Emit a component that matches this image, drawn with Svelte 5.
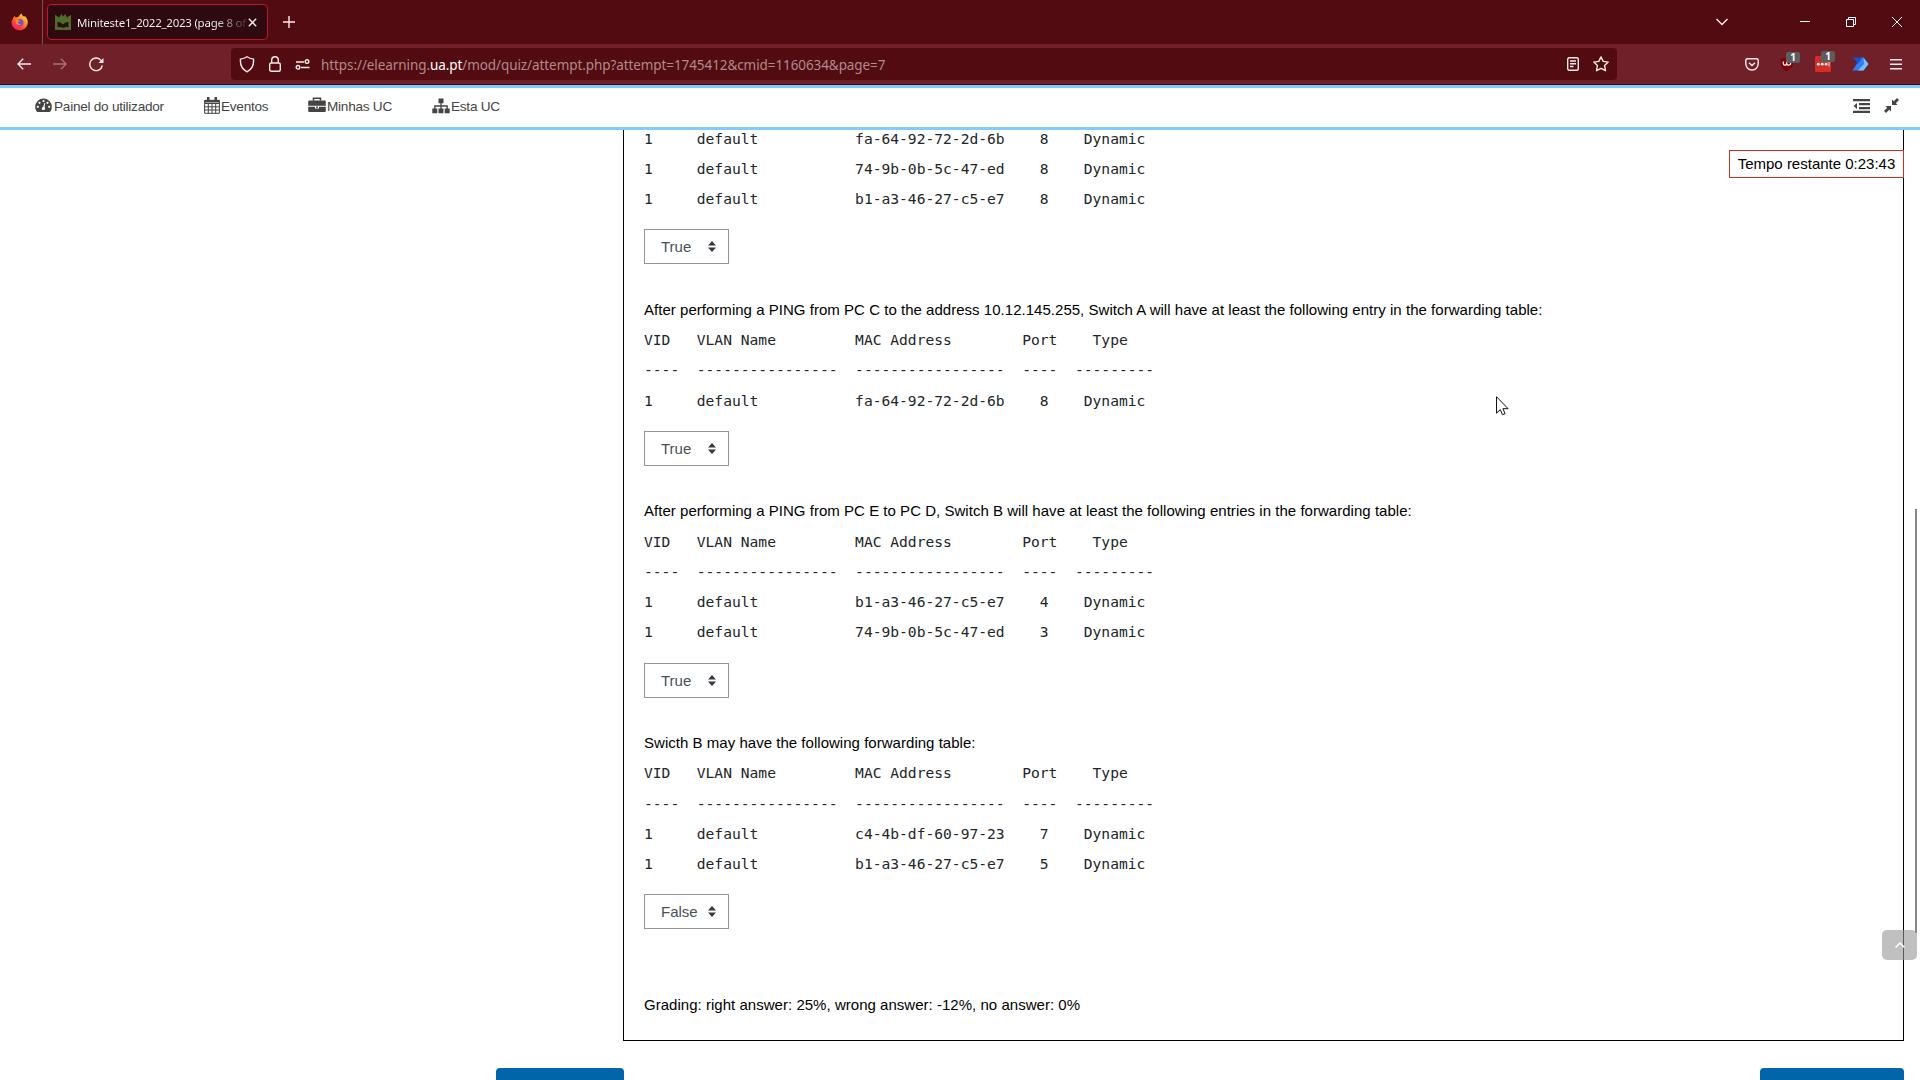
<script>
  const header = 'VID   VLAN Name         MAC Address        Port    Type';
  const rule = '----  ----------------  -----------------  ----  ---------';
  const row = (mac, port) => `1     default           ${mac}    ${port}    Dynamic`;
  const groups = [
    { title: '', lines: [row('fa-64-92-72-2d-6b', 8), row('74-9b-0b-5c-47-ed', 8), row('b1-a3-46-27-c5-e7', 8)], answer: 'True' },
    { title: 'After performing a PING from PC C to the address 10.12.145.255, Switch A will have at least the following entry in the forwarding table:', lines: [header, rule, row('fa-64-92-72-2d-6b', 8)], answer: 'True' },
    { title: 'After performing a PING from PC E to PC D, Switch B will have at least the following entries in the forwarding table:', lines: [header, rule, row('b1-a3-46-27-c5-e7', 4), row('74-9b-0b-5c-47-ed', 3)], answer: 'True' },
    { title: 'Swicth B may have the following forwarding table:', lines: [header, rule, row('c4-4b-df-60-97-23', 7), row('b1-a3-46-27-c5-e7', 5)], answer: 'False' }
  ];
</script>

<div class="window">
  <div class="tabs">
    <div class="pinned">
      <svg width="18" height="18" viewBox="0 0 18 18">
        <defs>
          <linearGradient id="fox" x1="1" y1="0" x2="0.2" y2="1"><stop offset="0" stop-color="#fff44f"/><stop offset=".4" stop-color="#ff9a1e"/><stop offset=".7" stop-color="#ff4530"/><stop offset="1" stop-color="#f0157a"/></linearGradient>
        </defs>
        <path d="M2 5.2 3.2 3l1.6 1.6C6 4 7 4 8 3.600 8.200 2 9.500 1 10.600.5c.1 1.700 1.400 2.300 2.600 3.300l.6-.8c1.800 1.600 3.200 4 3 6.700-.3 4.300-3.700 7.600-8 7.600-4.600 0-8.200-3.500-8.200-7.800C.6 7.700 1.200 6.300 2 5.200z" fill="url(#fox)"/>
        <circle cx="9" cy="9.500" r="3.500" fill="#7a4be0"/>
        <path d="M4.500 7c1.500-.8 3-.4 4.300.5-.2 1-1.500 1-2 1.700.2 1.600 2 2.200 3.700 1.600-1.500 1.900-5.300 1.300-6-1.300z" fill="#ff8a22"/>
      </svg>
    </div>
    <div class="tab">
      <svg width="16" height="16" viewBox="0 0 16 16"><path d="M0 .8 4 3.500 6.300 0 8 2.500 10.300 0 12 3.500l4-2.700V16H0z" fill="#4f6b29"/><path d="M2.500 8c2.200 0 4 .8 5.500 2.500C9.500 8.800 11.300 8 13.500 8v5H11l-3 .8L5 13H2.500z" fill="#27100c"/></svg>
      <span class="tabtitle">Miniteste1_2022_2023 (page 8 of</span>
      <svg class="line" width="9" height="9" viewBox="0 0 9 9"><path d="M.8.8l7.400 7.400M8.200.8.800 8.200"/></svg>
    </div>
    <svg class="line plus" width="12" height="12" viewBox="0 0 12 12"><path d="M6 0v12M0 6h12"/></svg>
    <div class="grow"></div>
    <div class="controls">
      <svg class="line" width="12" height="8" viewBox="0 0 12 8"><path d="M.5 1l5.500 5.500L11.500 1"/></svg>
      <svg class="line thin" width="10" height="10" viewBox="0 0 10 10"><path d="M0 4.500h10"/></svg>
      <svg class="line thin" width="10" height="10" viewBox="0 0 10 10"><path d="M.5 2.500h7v7h-7zM2.500 2V.5h7v7H8"/></svg>
      <svg class="line thin" width="10" height="10" viewBox="0 0 10 10"><path d="M0 0l10 10M10 0 0 10"/></svg>
    </div>
  </div>

  <div class="toolbar">
    <div class="nav">
      <svg class="line" width="14" height="12" viewBox="0 0 14 12"><path d="M14 6H1M6.200.7.900 6l5.300 5.300"/></svg>
      <svg class="line dim" width="14" height="12" viewBox="0 0 14 12"><path d="M0 6h13M7.800.7 13.100 6l-5.300 5.300"/></svg>
      <svg class="line" width="15" height="15" viewBox="0 0 15 15"><path d="M13.300 8.500A6.300 6.300 0 1 1 11.800 3.100L13.500 5"/><path d="M14.500 1v5h-5z" fill="#fbeaec" stroke="none"/></svg>
    </div>
    <div class="address">
      <svg class="line" width="16" height="17" viewBox="0 0 16 17"><path d="M8 .8c2 1.400 4 2 6.500 2.300C15 8.500 12.500 13.500 8 15.800 3.500 13.500 1 8.500 1.500 3.100 4 2.800 6 2.200 8 .8z"/></svg>
      <svg class="line" width="12" height="16" viewBox="0 0 12 16"><rect x=".7" y="7" width="10.600" height="8.200" rx="1.500"/><path d="M2.700 7V4a3.300 3.300 0 0 1 6.600 0v3"/></svg>
      <svg class="line tune" width="15" height="11" viewBox="0 0 15 11"><path d="M1 3h8M6 8.500h8.500"/><circle cx="12" cy="2.600" r="1.800"/><circle cx="3" cy="8.300" r="1.800"/></svg>
      <span class="url">https://elearning.<b>ua.pt</b>/mod/quiz/attempt.php?attempt=1745412&amp;cmid=1160634&amp;page=7</span>
      <div class="grow"></div>
      <svg class="line reader" width="12" height="14" viewBox="0 0 12 14"><rect x=".7" y=".7" width="10.600" height="12.600" rx="1.500"/><path d="M3 4h6M3 6.700h6M3 9.500h3.500"/></svg>
      <svg class="line" width="16" height="16" viewBox="0 0 16 16"><path d="M8 .9l2.200 4.500 5 .7-3.600 3.500.9 5.100L8 12.300l-4.500 2.400.9-5.100L.8 6.100l5-.7z" stroke-linejoin="round"/></svg>
    </div>
    <div class="grow"></div>
    <div class="extensions">
      <svg class="line" width="14" height="13" viewBox="0 0 14 13"><path d="M2.200.8h9.600c.8 0 1.400.6 1.400 1.400v3.600a6.200 6.200 0 0 1-12.400 0V2.200C.8 1.400 1.400.8 2.200.8z"/><path d="M4 4.700l3 2.800 3-2.800"/></svg>
      <div class="ext">
        <svg width="14" height="15" viewBox="0 0 14 15"><path d="M7 0c2 1.200 4 1.500 6.500 1.500 0 6-.5 9.500-6.500 13C1 11 .5 7.500.5 1.500 3 1.500 5 1.200 7 0z" fill="#800007"/><path d="M3.300 4.500v2c0 2.200 3.400 2.200 3.400 0v-2M6.700 6.300c0 2.500 4 2.300 4 0 0-1.200-1-1.900-2.200-1.700" fill="none" stroke="#fff" stroke-width="1.200"/></svg>
        <span class="count">1</span>
      </div>
      <div class="ext">
        <svg width="16" height="16" viewBox="0 0 16 16"><rect width="16" height="16" rx="1.500" fill="#d32d27"/><circle cx="3.300" cy="8.200" r="1.400" fill="#fff"/><circle cx="7.200" cy="8.200" r="1.400" fill="#fff"/><circle cx="11.100" cy="8.200" r="1.400" fill="#fff"/><path d="M14 5.800v4.800" stroke="#fff" stroke-width=".8"/></svg>
        <span class="count">1</span>
      </div>
      <svg width="17" height="14" viewBox="0 0 17 14"><path d="M9 .5h2.500l5 6.500-5 6.500H.5z" fill="#2f82ee"/><path d="M11.500.5l5 6.500-5 6.500H6l6-6.500z" fill="#77bcff"/><path d="M.5.500h9.700L6 6.700z" fill="#1550d0"/></svg>
      <svg class="line menu" width="12" height="11" viewBox="0 0 12 11"><path d="M0 .8h12M0 5.300h12M0 9.800h12"/></svg>
    </div>
  </div>

  <div class="sitebar">
    <span class="link l1"><svg width="17" height="15" viewBox="0 0 17 15"><path d="M8.500.5A8.300 8.300 0 0 0 .2 8.800c0 1.800.5 3.400 1.500 4.800.2.300.4.400.8.400h12c.4 0 .6-.1.800-.4 1-1.400 1.500-3 1.500-4.800A8.300 8.300 0 0 0 8.500.5z" fill="#444"/><g fill="#fff"><circle cx="2.800" cy="8.800" r="1.100"/><circle cx="4.500" cy="4.800" r="1.100"/><circle cx="8.500" cy="3" r="1.100"/><circle cx="12.500" cy="4.800" r="1.100"/><circle cx="14.200" cy="8.800" r="1.100"/><path d="M9.500 4.800l.8.300-.8 4c1.200 1 .7 3-1 3-2 0-2.300-2.400-.4-3.200z"/></g></svg><span class="label">Painel do utilizador</span></span>
    <span class="link l2"><svg width="16" height="17" viewBox="0 0 16 17"><path d="M.6 3.300h14.800v13H.6zM.6 6.500h14.800M.6 9.800h14.800M.6 13h14.800M4.300 6.500v10M8 6.500v10M11.700 6.500v10" fill="none" stroke="#444"/><path d="M.6 3h14.800v2.500H.6zM3 0h2.500v4.500H3zM10.500 0H13v4.500h-2.500z" fill="#444"/></svg><span class="label">Eventos</span></span>
    <span class="link l3"><svg width="18" height="17" viewBox="0 0 18 17"><path d="M5.500 3.500V1.200h7v2.300" fill="none" stroke="#444" stroke-width="1.600"/><path d="M1.500 3.500h15c.8 0 1.300.5 1.300 1.300v4H.2v-4c0-.8.500-1.300 1.300-1.300zM.2 9.800h6.800v1.800h4V9.800h6.800v4c0 .8-.5 1.200-1.300 1.200h-15c-.8 0-1.300-.4-1.300-1.200zM8 9.500h2v1.300H8z" fill="#444"/></svg><span class="label">Minhas UC</span></span>
    <span class="link"><svg width="18" height="16" viewBox="0 0 18 16"><path d="M6.500.5h5v4.700h-5zM.3 10.500h5v4.700h-5zM6.500 10.500h5v4.700h-5zM12.700 10.500h5v4.700h-5z" fill="#444"/><path d="M9 5v6M2.800 11V8h12.400v3" fill="none" stroke="#444" stroke-width="1.300"/></svg><span class="label">Esta UC</span></span>
    <div class="grow"></div>
    <svg width="17" height="14" viewBox="0 0 17 14"><path d="M0 0h17v2.300H0zM6 4h11v2.300H6zM6 8h11v2.300H6zM0 11.800h17V14H0zM4 4v6L.6 7z" fill="#444"/></svg>
    <svg class="compress" width="15" height="15" viewBox="0 0 15 15"><path d="M8 7V1.500l1.800 1.700L13 0l2 2-3.200 3.200L13.500 7zM7 8v5.500l-1.800-1.700L2 15l-2-2 3.200-3.200L1.500 8z" fill="#444"/></svg>
  </div>

  <main>
    <div class="question">
      {#each groups as g}
        {#if g.title}<p>{g.title}</p>{/if}
        {#each g.lines as line}<pre>{line}</pre>{/each}
        <div class="select"><span>{g.answer}</span><svg width="8" height="11" viewBox="0 0 8 11"><path d="M4 0l4 4.500H0zM4 11 0 6.500h8z" fill="#343a40"/></svg></div>
      {/each}
      <p class="grading">Grading: right answer: 25%, wrong answer: -12%, no answer: 0%</p>
    </div>
    <div class="buttons"><button class="prev">Página anterior</button><button class="next">Terminar tentativa</button></div>
  </main>

  <div class="timer">Tempo restante 0:23:43</div>
  <div class="scroll"></div>
  <div class="totop"><svg width="10" height="6" viewBox="0 0 10 6"><path d="M.5 5.500 5 1l4.500 4.500" fill="none" stroke="#fff" stroke-width="1.500"/></svg></div>
  <svg class="cursor" width="13" height="20" viewBox="0 0 13 20"><path d="M.5.700v16.500l3.800-3.600 2.200 5.200 2.600-1.100-2.200-5h5.200z" fill="#fff" stroke="#111" stroke-width="1"/></svg>
</div>

<style>
  :global(body) { margin: 0; overflow: hidden; }
  .window { position: relative; display: flex; flex-direction: column; width: 1920px; height: 1080px; overflow: hidden; background: #fff; font-family: "Liberation Sans", Arial, sans-serif; }
  .window * { box-sizing: border-box; }
  svg { flex: none; display: block; }
  .grow { flex: 1; }
  .line { fill: none; stroke: #fbeaec; stroke-width: 1.4; }
  .thin { stroke-width: 1; stroke: #fff; }
  .dim { opacity: .4; }
  .tabs { flex: none; height: 44px; background: #520b10; display: flex; align-items: center; font-family: "Noto Sans", "Open Sans", sans-serif; }
  .pinned { width: 43px; height: 44px; border-right: 1px solid #864b50; display: flex; align-items: center; padding-left: 11px; }
  .tab { margin-left: 4px; width: 221px; height: 36px; border: 1px solid #c0142a; border-radius: 4px; background: #2e0a10; display: flex; align-items: center; padding-left: 7px; }
  .tabtitle { width: 170px; margin-left: 6px; margin-right: 1px; overflow: hidden; white-space: nowrap; font-size: 11.5px; letter-spacing: -.25px; line-height: 20px; padding-top: 1px; color: transparent; background: linear-gradient(90deg, #fbfbfe 80%, #fbfbfe20 100%); background-clip: text; -webkit-background-clip: text; }
  .plus { margin-left: 15px; }
  .controls { display: flex; align-items: center; padding-right: 18px; gap: 36px; }
  .controls svg:first-child { margin-right: 36px; }
  .toolbar { flex: none; height: 41px; background: #6f2029; border-bottom: 1px solid #470a10; display: flex; align-items: center; }
  .nav { display: flex; align-items: center; gap: 22px; padding-left: 17px; width: 231px; }
  .address { width: 1386px; height: 32px; border-radius: 4px; background: #520b10; display: flex; align-items: center; padding: 0 8px; gap: 13px; }
  .address svg:first-child { margin-right: 1px; }
  .tune { margin-left: 1px; }
  .reader { margin-right: 1px; }
  .url { font-family: "Noto Sans", "Open Sans", sans-serif; font-size: 13.5px; letter-spacing: -.085px; padding-top: 1px; color: #b08a8d; white-space: nowrap; margin-left: -2px; }
  .url b { font-weight: 400; color: #fff; }
  .extensions { display: flex; align-items: center; padding-right: 18px; gap: 21px; }
  .ext { position: relative; }
  .count { position: absolute; left: 6px; top: -5px; width: 14px; height: 11px; border-radius: 2px; background: #5d5d5d; color: #fff; font: bold 10px/11px "Noto Sans", sans-serif; text-align: center; }
  .sitebar { flex: none; height: 45px; border: solid #7ecefd; border-width: 3px 0; background: #fff; display: flex; align-items: center; padding: 0 21px 4px 35px; color: #444; font-size: 13.6px; letter-spacing: -.25px; }
  .link { display: flex; align-items: center; gap: 1px; white-space: nowrap; }
  .label { padding-top: 2px; }
  .l1 { width: 169px; gap: 2px; } .l2 { width: 104px; } .l3 { width: 124px; }
  .compress { margin-left: 14px; }
  main { flex: 1; overflow: hidden; }
  .question { margin-left: 623px; width: 1281px; height: 917px; border: 1px solid #000; border-top: 0; padding: 0 20px; }
  .question > pre:first-of-type { margin-top: -6.3px; }
  p, pre { margin: 0; height: 30.25px; line-height: 30.25px; white-space: pre; }
  p { font-size: 15px; letter-spacing: .028px; color: #000; }
  pre { font-family: "DejaVu Sans Mono", monospace; font-size: 14.61px; color: #212529; }
  .select { width: 85px; height: 35px; margin: 15px 0 30.5px; border: 1px solid #8f959e; display: flex; align-items: center; justify-content: space-between; padding: 0 12px 0 16px; font-size: 15px; color: #495057; }
  .grading { margin-top: 60.7px; }
  .buttons { display: flex; justify-content: space-between; margin: 27px 16px 0 496px; }
  button { height: 38px; border: 0; border-radius: 4px; background: #0066a9; color: #fff; font: 15px "Liberation Sans", sans-serif; padding: 0; }
  .prev { width: 128px; } .next { width: 144px; }
  .timer { position: absolute; right: 16px; top: 150px; width: 175px; height: 28px; border: 1px solid #ca3120; background: #fff; font-size: 15px; line-height: 26px; text-align: center; white-space: nowrap; }
  .scroll { position: absolute; left: 1915px; top: 509px; width: 2px; height: 424px; background: #8b8385; }
  .totop { position: absolute; left: 1882px; top: 930px; width: 35px; height: 30px; border-radius: 5px; background: rgba(150,150,150,.6); display: flex; align-items: center; justify-content: center; }
  .cursor { position: absolute; left: 1496px; top: 396px; }
</style>
